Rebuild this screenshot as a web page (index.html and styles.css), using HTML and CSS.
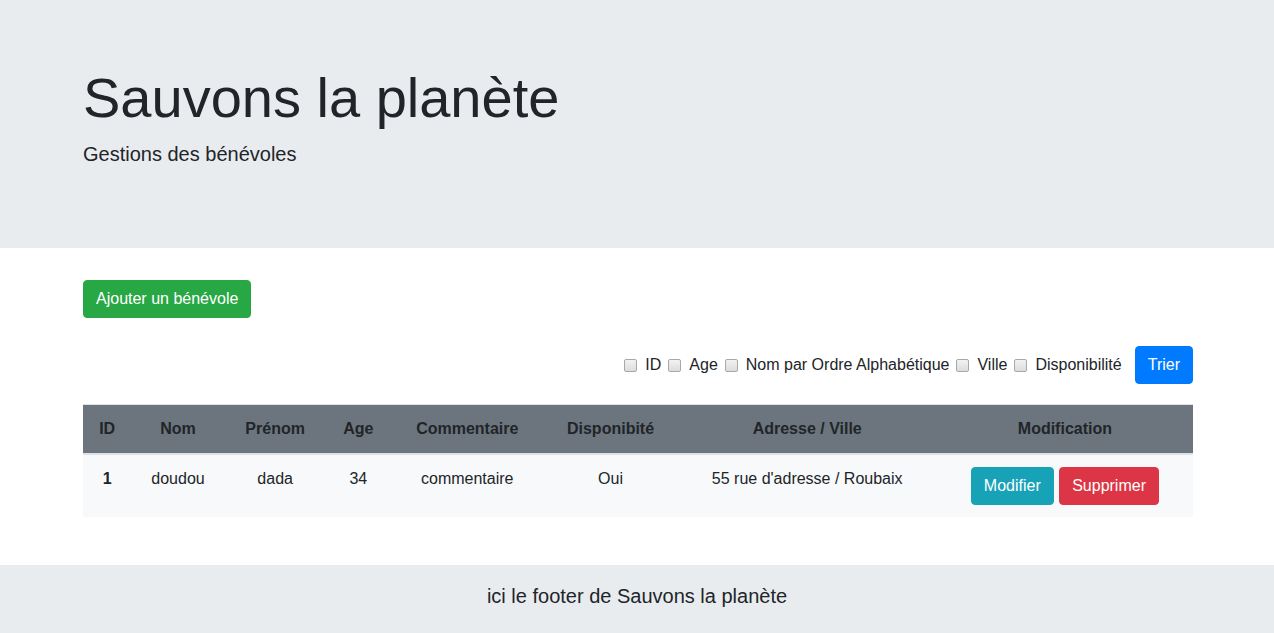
FILE: index.html
```html
<!DOCTYPE html>
<html lang="fr">
<head>
<meta charset="utf-8">
<title>Sauvons la planète</title>
<link rel="stylesheet" href="styles.css">
</head>
<body>
<header class="jumbotron">
  <div class="container">
    <h1 class="display">Sauvons la planète</h1>
    <p class="lead">Gestions des bénévoles</p>
  </div>
</header>
<main class="container">
  <div class="actions">
    <button class="btn btn-success">Ajouter un bénévole</button>
  </div>
  <form class="sort-form">
    <label class="check"><input type="checkbox"><span>ID</span></label>
    <label class="check"><input type="checkbox"><span>Age</span></label>
    <label class="check"><input type="checkbox"><span>Nom par Ordre Alphabétique</span></label>
    <label class="check"><input type="checkbox"><span>Ville</span></label>
    <label class="check"><input type="checkbox"><span>Disponibilité</span></label>
    <button type="button" class="btn btn-primary">Trier</button>
  </form>
  <table class="table">
    <thead>
      <tr>
        <th>ID</th>
        <th>Nom</th>
        <th>Prénom</th>
        <th>Age</th>
        <th>Commentaire</th>
        <th>Disponibité</th>
        <th>Adresse / Ville</th>
        <th>Modification</th>
      </tr>
    </thead>
    <tbody>
      <tr>
        <th>1</th>
        <td>doudou</td>
        <td>dada</td>
        <td>34</td>
        <td>commentaire</td>
        <td>Oui</td>
        <td>55 rue d'adresse / Roubaix</td>
        <td class="ops">
          <button class="btn btn-info">Modifier</button>
          <button class="btn btn-danger">Supprimer</button>
        </td>
      </tr>
    </tbody>
  </table>
</main>
<footer class="footer">
  <p>ici le footer de Sauvons la planète</p>
</footer>
</body>
</html>
```

FILE: styles.css
```css
* { box-sizing: border-box; }

body {
  margin: 0;
  font-family: "Liberation Sans", Arial, sans-serif;
  font-size: 16px;
  line-height: 1.5;
  color: #212529;
  background: #fff;
}

.container {
  width: 1140px;
  padding: 0 14px 0 16px;
  margin: 0 auto;
}

.jumbotron {
  background: #e9ecef;
  padding: 64px 0 63px;
  margin-bottom: 32px;
}

.display {
  margin: 0 0 8px;
  font-size: 56px;
  font-weight: 300;
  line-height: 1.2;
}

.lead {
  margin: 0 0 16px;
  font-size: 20px;
  font-weight: 300;
  line-height: 1.5;
}

.btn {
  display: inline-block;
  font-family: inherit;
  font-size: 16px;
  line-height: 1.5;
  padding: 6px 12px;
  border: 1px solid transparent;
  border-radius: 4px;
  color: #fff;
  cursor: pointer;
}

.btn-success { background: #28a745; border-color: #28a745; }
.btn-primary { background: #007bff; border-color: #007bff; }
.btn-info { background: #17a2b8; border-color: #17a2b8; }
.btn-danger { background: #dc3545; border-color: #dc3545; }

.actions {
  margin-bottom: 28px;
}

.sort-form {
  display: flex;
  justify-content: flex-end;
  align-items: center;
  margin-bottom: 20px;
}

.check {
  display: inline-flex;
  align-items: center;
  margin-right: 7px;
}

.check:last-of-type {
  margin-right: 8px;
}

.check input {
  appearance: none;
  -webkit-appearance: none;
  margin: 0 8px 0 0;
  width: 13px;
  height: 13px;
  border: 1px solid #a8a8a8;
  border-radius: 2px;
  background: linear-gradient(#f2f2f2, #dcdcdc);
}

.sort-form .btn {
  margin-left: 5px;
}

.table {
  width: 100%;
  border-collapse: collapse;
  margin-bottom: 48px;
  text-align: center;
}

.table th,
.table td {
  padding: 12px;
  vertical-align: top;
  border-top: 1px solid #dee2e6;
}

.table thead th {
  background: #6c757d;
  font-weight: 700;
  vertical-align: bottom;
  border-bottom: 2px solid #dee2e6;
}

.table tbody tr {
  background: #f8f9fa;
}

.table tbody th {
  font-weight: 700;
}

.ops .btn + .btn {
  margin-left: 1px;
}

.footer {
  background: #e9ecef;
  text-align: center;
  padding: 16px 0 22px;
}

.footer p {
  margin: 0;
  font-size: 20px;
  line-height: 30px;
}
```
